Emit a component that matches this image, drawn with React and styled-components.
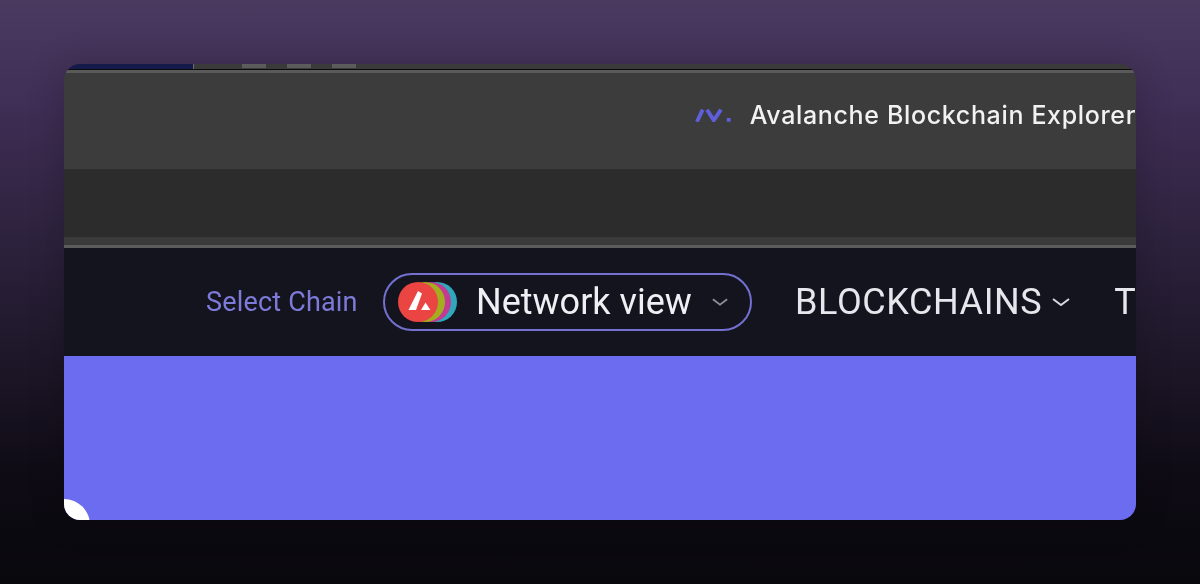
import React from "react";
import styled, { createGlobalStyle } from "styled-components";

const GlobalStyle = createGlobalStyle`
  html, body {
    margin: 0;
    height: 100%;
  }
  body {
    background: #0a080e;
    overflow: hidden;
  }
`;

const Page = styled.div`
  width: 1200px;
  height: 584px;
  box-sizing: border-box;
  padding: 64px 64px 64px;
  background: linear-gradient(180deg, #4b3a60 0%, #3f2e55 18%, #2a2039 45%, #0e0b14 82%, #09080d 100%);
  font-family: Roboto, "Noto Sans", sans-serif;
`;

const Window = styled.div`
  position: relative;
  height: 456px;
  display: flex;
  flex-direction: column;
  border-radius: 16px;
  overflow: hidden;
  box-shadow: 0 0 36px rgba(0, 0, 0, 0.2);
`;

const TabStrip = styled.div`
  height: 5px;
  flex: none;
  display: flex;
  background: #3a3a3a;
  border-bottom: 1px solid #0c0c0c;
`;

const ActiveTab = styled.div`
  width: 129px;
  background: #141a4a;
  border-right: 1px solid #6a6a6a;
`;

const TabDots = styled.div`
  display: flex;
  gap: 21px;
  margin-left: 48px;
`;

const TabDot = styled.span`
  width: 24px;
  height: 4px;
  background: #5c5c5c;
  filter: blur(0.5px);
`;

const TitleBar = styled.div`
  height: 99px;
  flex: none;
  display: flex;
  align-items: center;
  gap: 19px;
  box-sizing: border-box;
  padding: 0 0 12px 631px;
  background: #3c3c3c;
  border-top: 3px solid #5a5a5a;
  white-space: nowrap;
`;

const PageTitle = styled.span`
  font-family: Inter, "Noto Sans", sans-serif;
  font-size: 25px;
  font-weight: 500;
  letter-spacing: 0.65px;
  color: #f2f2f2;
  filter: blur(0.4px);
`;

const ToolBar = styled.div`
  height: 68px;
  flex: none;
  background: #2c2c2c;
`;

const ToolBarEdge = styled.div`
  height: 8px;
  flex: none;
  background: #3a3a3a;
  border-bottom: 3px solid #5c5c5c;
`;

const Nav = styled.nav`
  height: 108px;
  flex: none;
  display: flex;
  align-items: center;
  box-sizing: border-box;
  padding: 0 0 0 142px;
  background: #14141e;
  white-space: nowrap;
  overflow: hidden;
`;

const ChainLabel = styled.span`
  font-size: 27px;
  letter-spacing: 0.18px;
  color: #7d7ad9;
  width: 177px;
  flex: none;
  filter: blur(0.4px);
`;

const ChainPill = styled.div`
  width: 369px;
  height: 58px;
  flex: none;
  display: flex;
  align-items: center;
  box-sizing: border-box;
  padding: 0 22px 0 13px;
  border: 2px solid #7370d0;
  border-radius: 29px;
  margin-right: 43px;
`;

const PillText = styled.span`
  flex: 1;
  font-size: 36px;
  color: #f0f0f4;
  margin-left: 18px;
  filter: blur(0.4px);
`;

const NavItem = styled.span`
  font-size: 36px;
  letter-spacing: 0.6px;
  color: #e6e6ec;
  filter: blur(0.4px);
`;

const NavNext = styled(NavItem)`
  margin-left: 44px;
`;

const Chevron = styled.svg`
  flex: none;
  margin-left: ${(p) => p.$gap || 0}px;
`;

const Hero = styled.div`
  flex: 1;
  background: #6c6cf0;
`;

const Blob = styled.div`
  position: absolute;
  left: -26px;
  bottom: -31px;
  width: 52px;
  height: 52px;
  border-radius: 50%;
  background: #fff;
`;

const BrandMark = () => (
  <svg width="37" height="14" viewBox="0 0 37 14" fill="none" stroke="#5f5fdc" strokeWidth="4">
    <path d="M2 14 L8 1.5" />
    <path d="M12.5 1.5 L19.5 12.5 L27 1.5" />
    <path d="M33 12 L37 12" />
  </svg>
);

const ChainStack = () => (
  <svg width="60" height="42" viewBox="0 0 60 42">
    <circle cx="39" cy="21" r="20" fill="#2fa8bc" />
    <circle cx="33" cy="21" r="20" fill="#c23a92" />
    <circle cx="27" cy="21" r="20" fill="#a4ad1e" />
    <circle cx="20" cy="21" r="20" fill="#ea4542" />
    <path d="M20 10 L24 12.5 L18 29 L10.5 29 Z" fill="#fff" />
    <path d="M27.5 21.5 L32.4 29 L23 29 Z" fill="#fff" />
  </svg>
);

const ChevronDown = ({ width, gap, color }) => (
  <Chevron $gap={gap} width={width} height="8" viewBox="0 0 18 8" fill="none" stroke={color} strokeWidth="2">
    <path d="M1 1 L9 7 L17 1" />
  </Chevron>
);

export default function App() {
  return (
    <>
      <GlobalStyle />
      <Page>
        <Window>
          <TabStrip>
            <ActiveTab />
            <TabDots>
              <TabDot />
              <TabDot />
              <TabDot />
            </TabDots>
          </TabStrip>
          <TitleBar>
            <BrandMark />
            <PageTitle>Avalanche Blockchain Explorer</PageTitle>
          </TitleBar>
          <ToolBar />
          <ToolBarEdge />
          <Nav>
            <ChainLabel>Select Chain</ChainLabel>
            <ChainPill>
              <ChainStack />
              <PillText>Network view</PillText>
              <ChevronDown width={16} color="#8f8fa0" />
            </ChainPill>
            <NavItem>BLOCKCHAINS</NavItem>
            <ChevronDown width={18} gap={10} color="#d8d8e0" />
            <NavNext>TRANSACTIONS</NavNext>
          </Nav>
          <Hero />
          <Blob />
        </Window>
      </Page>
    </>
  );
}
